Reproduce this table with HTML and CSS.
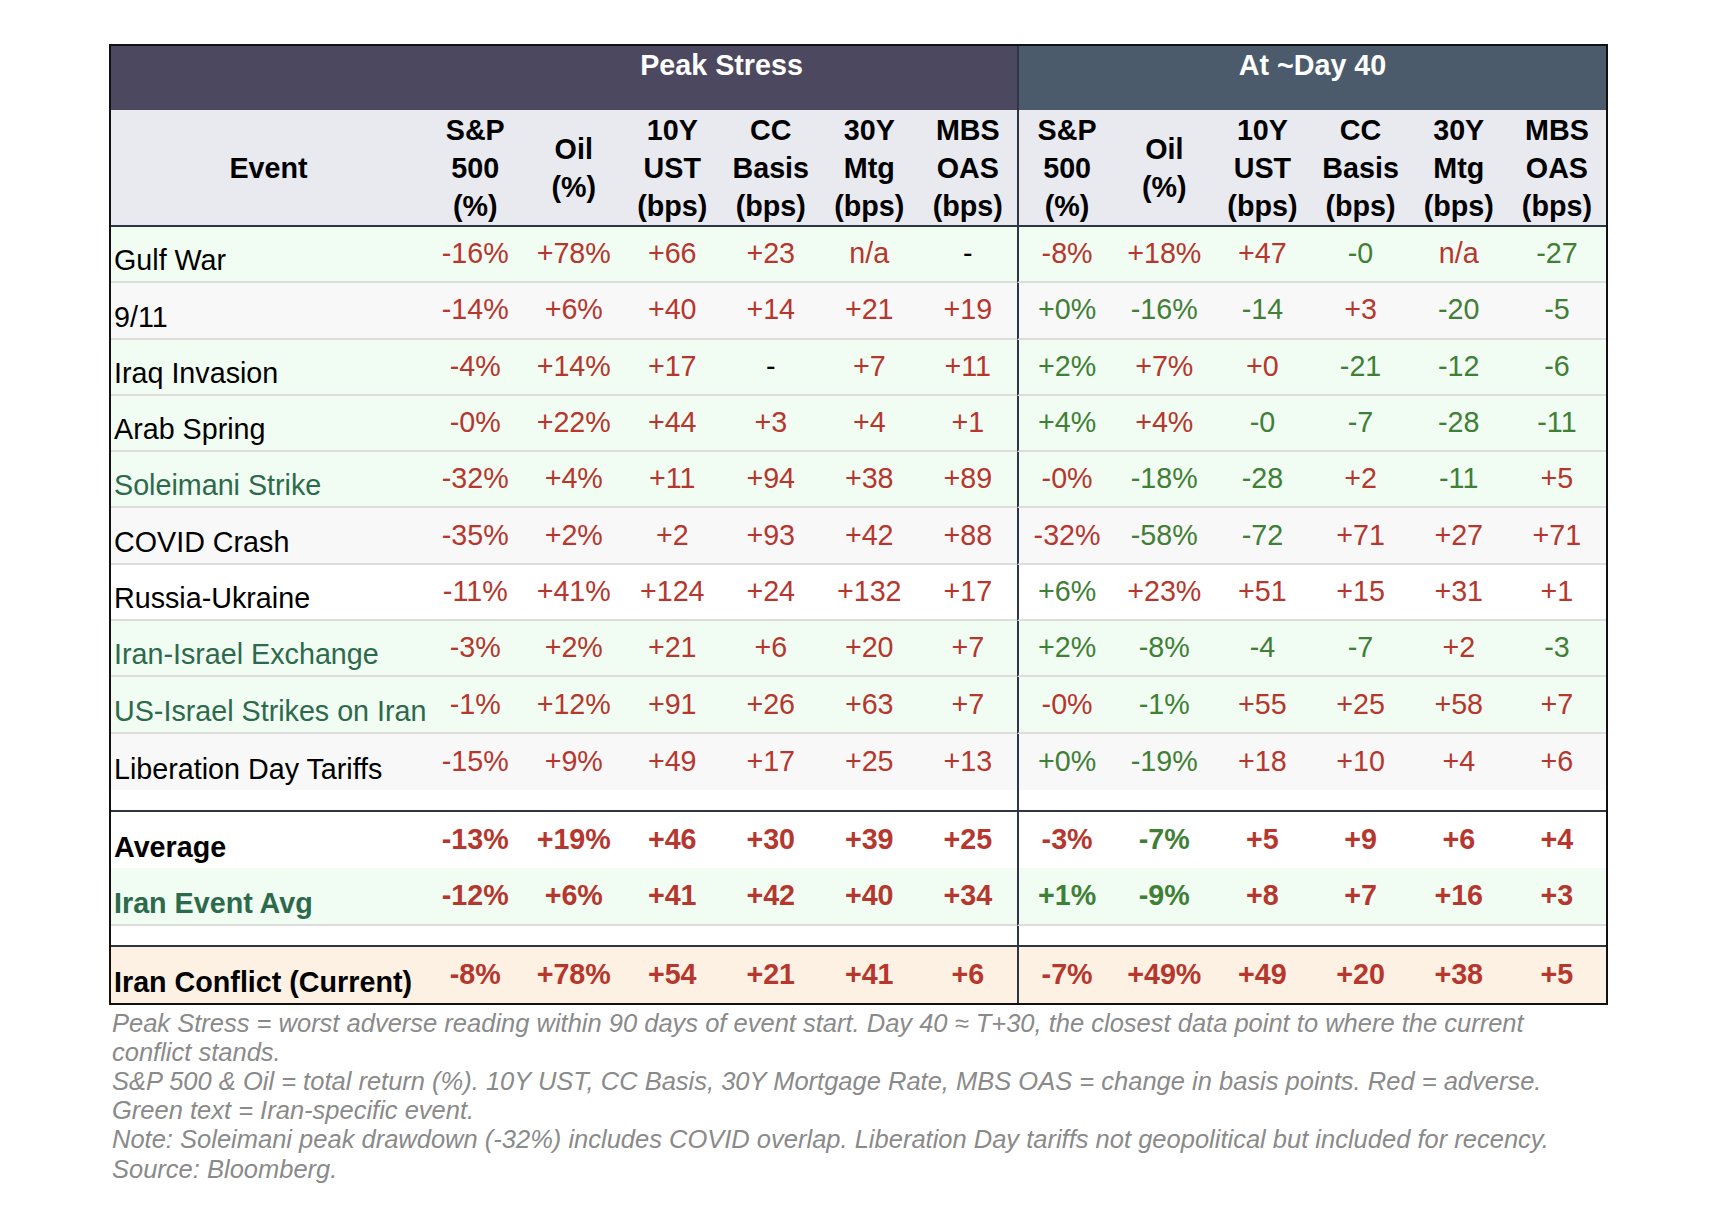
FILE: index.html
```html
<!DOCTYPE html>
<html lang="en">
<head>
<meta charset="utf-8">
<title>Geopolitical Stress Events</title>
<link rel="stylesheet" href="styles.css">
</head>
<body>
<div class="page">
<table class="stress">
<colgroup>
<col class="c-event">
<col class="c-peak"><col class="c-peak"><col class="c-peak"><col class="c-peak"><col class="c-peak"><col class="c-peak">
<col class="c-day"><col class="c-day"><col class="c-day"><col class="c-day"><col class="c-day"><col class="c-day">
</colgroup>
<thead>
<tr class="band">
<th class="band-peak"></th>
<th class="band-peak" colspan="6">Peak Stress</th>
<th class="band-day div" colspan="6">At ~Day 40</th>
</tr>
<tr class="cols">
<th>Event</th>
<th>S&amp;P<br>500<br>(%)</th>
<th>Oil<br>(%)</th>
<th>10Y<br>UST<br>(bps)</th>
<th>CC<br>Basis<br>(bps)</th>
<th>30Y<br>Mtg<br>(bps)</th>
<th>MBS<br>OAS<br>(bps)</th>
<th class="div">S&amp;P<br>500<br>(%)</th>
<th>Oil<br>(%)</th>
<th>10Y<br>UST<br>(bps)</th>
<th>CC<br>Basis<br>(bps)</th>
<th>30Y<br>Mtg<br>(bps)</th>
<th>MBS<br>OAS<br>(bps)</th>
</tr>
</thead>
<tbody>
<tr class="row bg-green">
<td class="ev">Gulf War</td>
<td class="r">-16%</td><td class="r">+78%</td><td class="r">+66</td><td class="r">+23</td><td class="r">n/a</td><td class="k">-</td>
<td class="r div">-8%</td><td class="r">+18%</td><td class="r">+47</td><td class="g">-0</td><td class="r">n/a</td><td class="g">-27</td>
</tr>
<tr class="row bg-gray">
<td class="ev">9/11</td>
<td class="r">-14%</td><td class="r">+6%</td><td class="r">+40</td><td class="r">+14</td><td class="r">+21</td><td class="r">+19</td>
<td class="g div">+0%</td><td class="g">-16%</td><td class="g">-14</td><td class="r">+3</td><td class="g">-20</td><td class="g">-5</td>
</tr>
<tr class="row bg-green">
<td class="ev">Iraq Invasion</td>
<td class="r">-4%</td><td class="r">+14%</td><td class="r">+17</td><td class="k">-</td><td class="r">+7</td><td class="r">+11</td>
<td class="g div">+2%</td><td class="r">+7%</td><td class="r">+0</td><td class="g">-21</td><td class="g">-12</td><td class="g">-6</td>
</tr>
<tr class="row bg-green">
<td class="ev">Arab Spring</td>
<td class="r">-0%</td><td class="r">+22%</td><td class="r">+44</td><td class="r">+3</td><td class="r">+4</td><td class="r">+1</td>
<td class="g div">+4%</td><td class="r">+4%</td><td class="g">-0</td><td class="g">-7</td><td class="g">-28</td><td class="g">-11</td>
</tr>
<tr class="row bg-green">
<td class="ev iran">Soleimani Strike</td>
<td class="r">-32%</td><td class="r">+4%</td><td class="r">+11</td><td class="r">+94</td><td class="r">+38</td><td class="r">+89</td>
<td class="r div">-0%</td><td class="g">-18%</td><td class="g">-28</td><td class="r">+2</td><td class="g">-11</td><td class="r">+5</td>
</tr>
<tr class="row bg-gray">
<td class="ev">COVID Crash</td>
<td class="r">-35%</td><td class="r">+2%</td><td class="r">+2</td><td class="r">+93</td><td class="r">+42</td><td class="r">+88</td>
<td class="r div">-32%</td><td class="g">-58%</td><td class="g">-72</td><td class="r">+71</td><td class="r">+27</td><td class="r">+71</td>
</tr>
<tr class="row bg-white">
<td class="ev">Russia-Ukraine</td>
<td class="r">-11%</td><td class="r">+41%</td><td class="r">+124</td><td class="r">+24</td><td class="r">+132</td><td class="r">+17</td>
<td class="g div">+6%</td><td class="r">+23%</td><td class="r">+51</td><td class="r">+15</td><td class="r">+31</td><td class="r">+1</td>
</tr>
<tr class="row bg-green">
<td class="ev iran">Iran-Israel Exchange</td>
<td class="r">-3%</td><td class="r">+2%</td><td class="r">+21</td><td class="r">+6</td><td class="r">+20</td><td class="r">+7</td>
<td class="g div">+2%</td><td class="g">-8%</td><td class="g">-4</td><td class="g">-7</td><td class="r">+2</td><td class="g">-3</td>
</tr>
<tr class="row bg-green">
<td class="ev iran">US-Israel Strikes on Iran</td>
<td class="r">-1%</td><td class="r">+12%</td><td class="r">+91</td><td class="r">+26</td><td class="r">+63</td><td class="r">+7</td>
<td class="r div">-0%</td><td class="g">-1%</td><td class="r">+55</td><td class="r">+25</td><td class="r">+58</td><td class="r">+7</td>
</tr>
<tr class="row bg-gray last">
<td class="ev">Liberation Day Tariffs</td>
<td class="r">-15%</td><td class="r">+9%</td><td class="r">+49</td><td class="r">+17</td><td class="r">+25</td><td class="r">+13</td>
<td class="g div">+0%</td><td class="g">-19%</td><td class="r">+18</td><td class="r">+10</td><td class="r">+4</td><td class="r">+6</td>
</tr>
<tr class="spacer spacer-a">
<td></td><td></td><td></td><td></td><td></td><td></td><td></td>
<td class="div"></td><td></td><td></td><td></td><td></td><td></td>
</tr>
<tr class="row bold bg-white avg">
<td class="ev">Average</td>
<td class="r">-13%</td><td class="r">+19%</td><td class="r">+46</td><td class="r">+30</td><td class="r">+39</td><td class="r">+25</td>
<td class="r div">-3%</td><td class="g">-7%</td><td class="r">+5</td><td class="r">+9</td><td class="r">+6</td><td class="r">+4</td>
</tr>
<tr class="row bold bg-green iavg">
<td class="ev iran">Iran Event Avg</td>
<td class="r">-12%</td><td class="r">+6%</td><td class="r">+41</td><td class="r">+42</td><td class="r">+40</td><td class="r">+34</td>
<td class="g div">+1%</td><td class="g">-9%</td><td class="r">+8</td><td class="r">+7</td><td class="r">+16</td><td class="r">+3</td>
</tr>
<tr class="spacer spacer-b">
<td></td><td></td><td></td><td></td><td></td><td></td><td></td>
<td class="div"></td><td></td><td></td><td></td><td></td><td></td>
</tr>
<tr class="row bold bg-peach current">
<td class="ev">Iran Conflict (Current)</td>
<td class="r">-8%</td><td class="r">+78%</td><td class="r">+54</td><td class="r">+21</td><td class="r">+41</td><td class="r">+6</td>
<td class="r div">-7%</td><td class="r">+49%</td><td class="r">+49</td><td class="r">+20</td><td class="r">+38</td><td class="r">+5</td>
</tr>
</tbody>
</table>
<div class="notes">
<p>Peak Stress = worst adverse reading within 90 days of event start. Day 40 ≈ T+30, the closest data point to where the current<br>conflict stands.</p>
<p>S&amp;P 500 &amp; Oil = total return (%). 10Y UST, CC Basis, 30Y Mortgage Rate, MBS OAS = change in basis points. Red = adverse.<br>Green text = Iran-specific event.</p>
<p>Note: Soleimani peak drawdown (-32%) includes COVID overlap. Liberation Day tariffs not geopolitical but included for recency.</p>
<p>Source: Bloomberg.</p>
</div>
</div>
</body>
</html>
```

FILE: styles.css
```css
html, body {
  margin: 0;
  padding: 0;
  background: #ffffff;
}

.page {
  padding: 44px 0 0 109px;
  font-family: "Liberation Sans", Arial, Helvetica, sans-serif;
}

.stress {
  width: 1499px;
  box-sizing: border-box;
  table-layout: fixed;
  border-collapse: separate;
  border-spacing: 0;
  border: 2px solid #111111;
  font-size: 28.7px;
  color: #000000;
}

.c-event { width: 315px; }
.c-peak { width: 98.5px; }
.c-day { width: 98.17px; }

.stress th,
.stress td {
  padding: 0;
  text-align: center;
  white-space: nowrap;
}

.stress .div {
  border-left: 2px solid #2e3645;
}

/* Band header */
.band th {
  height: 64px;
  vertical-align: top;
  color: #ffffff;
  font-weight: 700;
  line-height: 38px;
}
.band-peak { background: #4c4860; }
.band-day { background: #4b5b6c; }

/* Column header */
.cols th {
  height: 115px;
  background: #e8eaef;
  font-weight: 700;
  line-height: 38px;
  vertical-align: middle;
  border-bottom: 2px solid #2e3645;
}

/* Data rows */
.row td {
  height: 52.3px;
  line-height: 32px;
  vertical-align: middle;
  padding-bottom: 2px;
  border-bottom: 2px solid #dddddd;
}
.row td.ev {
  text-align: left;
  vertical-align: bottom;
  padding-left: 3px;
  padding-bottom: 2px;
  line-height: 37px;
}
.row.last td,
.row.avg td,
.row.current td {
  border-bottom: 0;
  height: 54px;
}
.row.iavg td {
  height: 54px;
}

.bold td { font-weight: 700; }

.bg-green td { background: #f1fcf3; }
.bg-gray td { background: #f8f8f8; }
.bg-white td { background: #ffffff; }
.bg-peach td { background: #fcf1e2; }

.r { color: #b5372e; }
.g { color: #3f8036; }
.k { color: #000000; }
.ev.iran { color: #2c6a4b; }

/* Spacer rows */
.spacer td {
  background: #ffffff;
  border-bottom: 2px solid #2e3645;
}
.spacer-a td { height: 20px; }
.spacer-b td { height: 19px; }

/* Footnotes */
.notes {
  margin-top: 4px;
  padding-left: 3px;
  color: #8a8a8a;
  font-style: italic;
  font-size: 25.5px;
  line-height: 29.2px;
}
.notes p {
  margin: 0;
  white-space: nowrap;
}
```
